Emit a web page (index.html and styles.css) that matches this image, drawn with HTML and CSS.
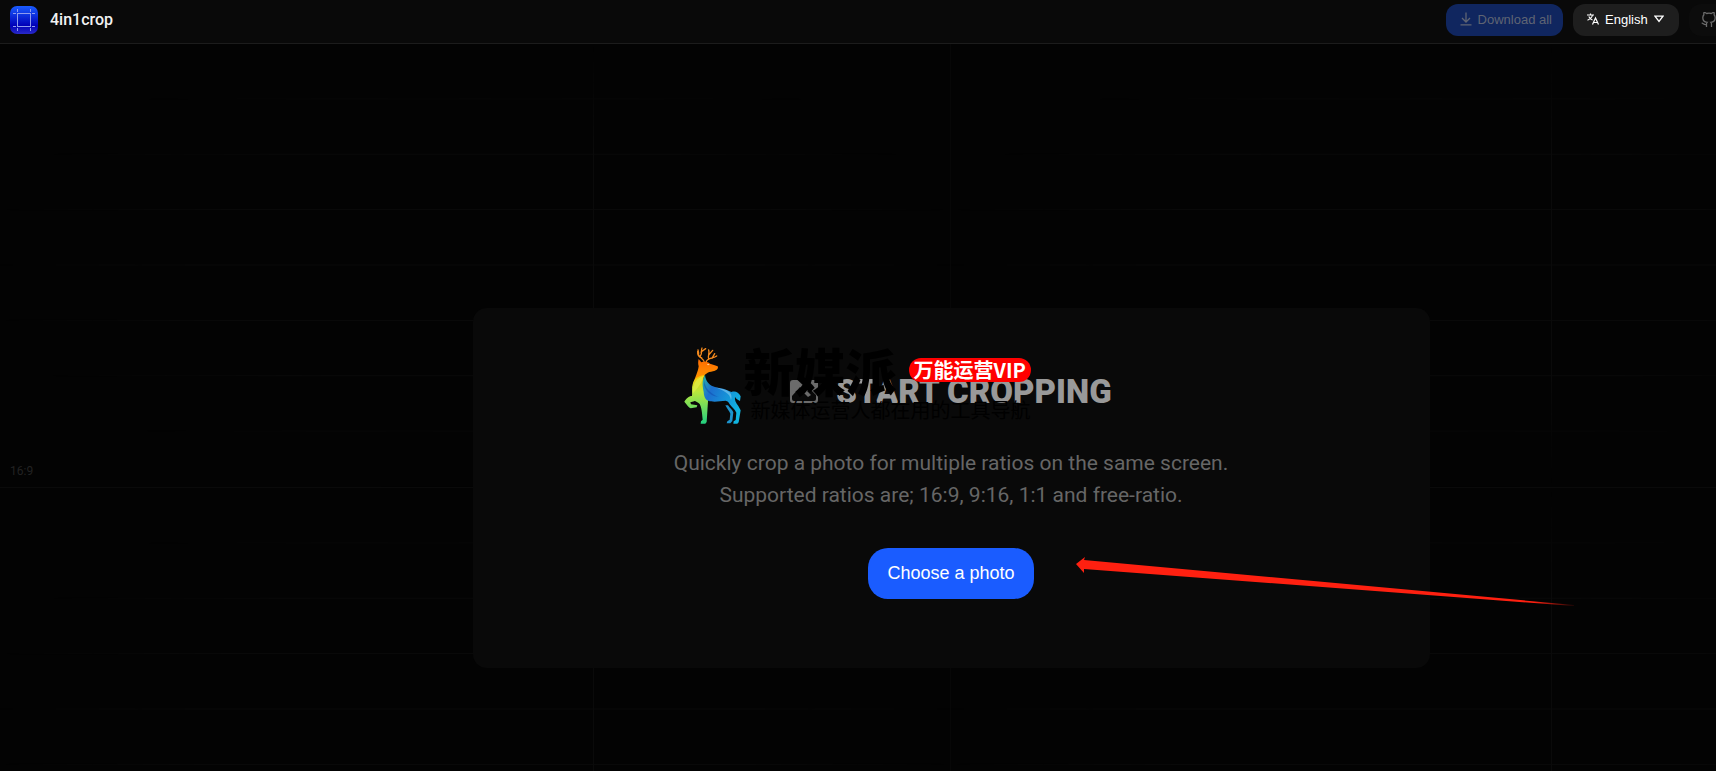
FILE: index.html
```html
<!DOCTYPE html>
<html lang="en">
<head>
    <meta charset="utf-8">
    <title>4in1crop</title>
    <link rel="stylesheet" href="styles.css">
</head>
<body>
    <div class="page">
        <header class="header">
            <a class="brand" href="#">
                <svg class="brand-logo" viewBox="0 0 28 28" aria-hidden="true">
                    <defs>
                        <linearGradient id="logoFill" x1="0" y1="0" x2="0" y2="1">
                            <stop offset="0" stop-color="#1a5cff"/>
                            <stop offset="0.7" stop-color="#0000b8"/>
                            <stop offset="1" stop-color="#2a2ac8"/>
                        </linearGradient>
                    </defs>
                    <rect width="28" height="28" rx="7" fill="url(#logoFill)"/>
                    <g stroke="#8f9bee" stroke-width="1" fill="none">
                        <path d="M7.500 3v3M7.500 7v14M7.500 22v3M20.500 3v3M20.500 7v14M20.500 22v3"/>
                        <path d="M3 7.500h3M7 7.500h14M22 7.500h3M3 20.500h3M7 20.500h14M22 20.500h3"/>
                    </g>
                </svg>
                <span class="brand-name">4in1crop</span>
            </a>
            <div class="actions">
                <button class="btn btn-download" type="button" disabled>
                    <svg width="12" height="14" viewBox="0 0 12 14" fill="none" stroke="currentColor" stroke-width="1.300" aria-hidden="true">
                        <path d="M6 0.500v9M2 6l4 4 4-4M0.500 12.800h11"/>
                    </svg>
                    Download all
                </button>
                <label class="btn btn-language">
                    <svg width="12" height="12" viewBox="0 0 12 12" fill="none" stroke="currentColor" stroke-width="1.200" aria-hidden="true">
                        <path d="M0 2h7M3.500 0.500V2M5.500 2C5 4.500 3 6.200 0.500 7.200M1.800 3.500C2.500 5 4 6.500 5.500 7"/>
                        <path d="M5.500 11.500L8.500 5l3 6.500M6.600 9.500h3.800"/>
                    </svg>
                    <select aria-label="Language">
                        <option>English</option>
                    </select>
                    <svg width="10" height="8" viewBox="0 0 10 8" fill="none" stroke="currentColor" stroke-width="1.300" aria-hidden="true">
                        <path d="M1 1.200h8L5 6.500z"/>
                    </svg>
                </label>
                <a class="btn btn-github" href="#" aria-label="GitHub">
                    <svg width="16" height="16" viewBox="0 0 16 16" fill="none" stroke="currentColor" stroke-width="1.300" aria-hidden="true">
                        <path d="M5.500 15v-2.500c-2.500.6-3-1-4.800-1.700M5.500 15v-2.800c0-.9.200-1.500.6-1.900-2.400-.3-4.300-1.300-4.300-4.600 0-1.200.4-2.200 1.100-3-.2-.8-.2-1.600.1-2.300 1 0 2 .6 2.700 1.100a9.500 9.500 0 0 1 4.600 0C11 1 12 .4 13 .4c.3.700.3 1.500.1 2.300.7.800 1.100 1.800 1.100 3 0 3.300-1.900 4.300-4.300 4.600.4.400.6 1 .6 1.900V15"/>
                    </svg>
                </a>
            </div>
        </header>

        <main class="stage">
            <div class="panels">
                <section class="panel"><span class="ratio">16:9</span></section>
                <section class="panel panel-right"></section>
                <section class="panel"></section>
                <section class="panel panel-right"></section>
            </div>

            <div class="card">
                <h1 class="card-title">
                    <svg width="28" height="24" viewBox="0 0 28 24" aria-hidden="true">
                        <path fill="#6b6b6b" fill-rule="evenodd" d="M3 0h22q3 0 3 3v17q0 3-3 3H3q-3 0-3-3V3q0-3 3-3zM2 16v3q0 2 2 2h20q2 0 2-2v-4l-6-6-5 3-5-5z"/>
                        <path fill="#6b6b6b" d="M12 11l3-2 6 6-3 2z"/>
                    </svg>
                    START CROPPING
                </h1>
                <p class="card-text">
                    Quickly crop a photo for multiple ratios on the same screen.<br>
                    Supported ratios are; 16:9, 9:16, 1:1 and free-ratio.
                </p>
                <button class="btn-choose" type="button">Choose a photo</button>

                <div class="stamp" lang="zh">
                    <svg class="deer" viewBox="0 0 192 258" aria-hidden="true">
                        <defs>
                            <linearGradient id="deerHead" x1="0" y1="0" x2="0" y2="1">
                                <stop offset="0" stop-color="#ff6a00"/>
                                <stop offset="1" stop-color="#ffb000"/>
                            </linearGradient>
                            <linearGradient id="deerNeck" x1="0" y1="0" x2="0" y2="1">
                                <stop offset="0" stop-color="#ffc400"/>
                                <stop offset="0.350" stop-color="#b8e83c"/>
                                <stop offset="1" stop-color="#22cf80"/>
                            </linearGradient>
                            <linearGradient id="deerBody" x1="0" y1="0" x2="1" y2="0.600">
                                <stop offset="0" stop-color="#27b8a0"/>
                                <stop offset="0.300" stop-color="#1c6fcf"/>
                                <stop offset="1" stop-color="#10b4e0"/>
                            </linearGradient>
                        </defs>
                        <g fill="none" stroke="#f58a1e" stroke-width="4" stroke-linecap="round">
                            <path d="M73 62C72 48 54 48 54 32M65 48C54 44 52 38 53 28M61 42C68 34 62 24 66 18M63 30l14-10M78 62C80 46 96 52 110 42M86 52C82 42 90 36 86 24M87 38l11-13M96 49l8-14M56 34l-2-10"/>
                        </g>
                        <path fill="url(#deerHead)" d="M56 51l8 10c10-3 20-1 26 4 8 3 16 5 23 8 3 6-2 11-8 13-8 3-16 2-22 6-12 7-20 17-26 27-8 9-14 16-18 27-2-18 4-34 10-48 4-10 6-17 7-25-2-7-2-15 0-22z"/>
                        <path fill="url(#deerNeck)" d="M74 98c-8 20-4 32 3 46 5 12 9 20 7 34l-4 62-4 5H62l1-7 5-5c-2-22-3-36-9-47-6-5-12-8-15-9-6 2-9 2-13 4l2 6 19 3-2 6-18 3c-6-3-11-10-19-20 6-9 13-17 23-17 2-12-2-25 2-35 3-15 12-24 36-29z"/>
                        <path fill="#e0ef48" opacity="0.700" d="M70 102c-20 6-32 22-33 54 14-16 29-31 33-54z"/>
                        <path fill="url(#deerBody)" d="M75 98c2 20 13 32 30 37 15 4 34 6 49 15 11-4 22 0 28 13l-2 14c-8-5-13-8-15-13-2 10 3 19 10 28l7 13-6 36-4 4h-12l1-7 6-4 2-22c-4-10-14-16-20-25-3-7-6-10-12-11-15 0-29 5-43 2-13 0-22-8-23-28-3-18-7-32 4-52z"/>
                        <path fill="#104fb0" opacity="0.550" d="M73 114c2 27 16 38 42 51-17-2-37-13-43-36z"/>
                        <path fill="#9bd8f6" opacity="0.500" d="M105 136c16 4 32 5 43 14 7 6 8 16 5 25-2-22-25-30-48-39z"/>
                        <path fill="#1d93cc" d="M144 190c6 10 12 12 16 21l-3 26-6 7h-11l2-6 7-5 2-18c-3-8-9-13-15-25z"/>
                        <path fill="#ffe9c8" d="M81 66l8 1-5 3z"/>
                    </svg>
                    <div class="stamp-body">
                        <div class="stamp-row">
                            <strong class="stamp-name">新媒派</strong>
                            <span class="stamp-pill">万能运营VIP</span>
                        </div>
                        <span class="stamp-tagline">新媒体运营人都在用的工具导航</span>
                    </div>
                </div>

                <svg class="pointer" viewBox="0 0 504 52" aria-hidden="true">
                    <defs>
                        <linearGradient id="pointerFill">
                            <stop offset="0.920" stop-color="#ff2010"/>
                            <stop offset="1" stop-color="#ff2010" stop-opacity="0.100"/>
                        </linearGradient>
                    </defs>
                    <path fill="url(#pointerFill)" d="M0 8l9-7-1 3 490 45v1L8 13v4z"/>
                </svg>
            </div>
        </main>
    </div>
</body>
</html>
```
FILE: styles.css
```css
* {
    box-sizing: border-box;
}
body {
    margin: 0;
    height: 100vh;
    overflow: hidden;
    background-color: #030303;
    color: #fff;
    font-family: Roboto, sans-serif;
}
.page {
    min-width: 1902px;
}

/* header */
.header {
    display: flex;
    justify-content: space-between;
    align-items: flex-start;
    height: 44px;
    padding: 4px 10px;
    background-color: #090909;
    border-bottom: 1px solid #1c1c1c;
}
.brand {
    display: flex;
    align-items: center;
    gap: 12px;
    height: 32px;
    color: #f2f2f2;
    text-decoration: none;
}
.brand-logo {
    width: 28px;
    height: 28px;
}
.brand-name {
    padding-bottom: 2px;
    font-size: 16px;
    font-weight: 500;
}
.actions {
    display: flex;
    gap: 10px;
}
.btn {
    display: flex;
    align-items: center;
    height: 32px;
    border: none;
    border-radius: 12px;
    font-family: "Liberation Sans", sans-serif;
    font-size: 13px;
}
.btn-download {
    gap: 6px;
    padding: 0 11px 2px 14px;
    background-color: #10265f;
    color: #5f6473;
}
.btn-language {
    gap: 6px;
    padding: 0 15px 2px 14px;
    background-color: #1e1e1e;
    color: #fff;
}
.btn-language select {
    appearance: none;
    border: none;
    padding: 0;
    background: none;
    color: inherit;
    font: inherit;
}
.btn-github {
    width: 203px;
    padding: 0 12px;
    background-color: #0c0c0c;
    color: #6b6b6b;
}

/* crop panels */
.stage {
    display: grid;
}
.panels {
    grid-area: 1 / 1;
    display: grid;
    grid-template-columns: 1fr 1fr;
    grid-auto-rows: 444px;
}
.panel {
    display: flex;
    align-items: flex-end;
    position: relative;
    border-right: 1px solid #070707;
    border-bottom: 1px solid #0a0a0a;
}
.panel::before {
    content: "";
    position: absolute;
    inset: 0;
    background-image:
        linear-gradient(to right, #0a0a0a 1px, transparent 1px),
        linear-gradient(to bottom, #0a0a0a 1px, transparent 1px);
    background-size: 121px 12.5%;
    background-position: 109px -1px;
    mask-image: radial-gradient(ellipse at center, #000 40%, transparent 72%);
}
.panel-right::before {
    background-position: 116px -1px;
}
.ratio {
    padding: 9px 10px;
    color: #222;
    font-size: 12px;
    line-height: 14px;
}

/* start card */
.card {
    grid-area: 1 / 1;
    place-self: center;
    position: relative;
    display: flex;
    flex-direction: column;
    align-items: center;
    justify-content: center;
    width: 957px;
    min-height: 360px;
    padding-bottom: 2px;
    border-radius: 14px;
    background-color: #090909;
}
.card-title {
    display: flex;
    align-items: center;
    gap: 18px;
    margin: 0 0 39px;
    color: #999;
    font-size: 33px;
    font-weight: 900;
    line-height: 32px;
}
.card-text {
    margin: 0 0 37px;
    color: #666;
    font-size: 21px;
    line-height: 32px;
    text-align: center;
}
.btn-choose {
    height: 51px;
    padding: 0 19px;
    border: none;
    border-radius: 20px;
    background-color: #1a5cff;
    color: #fff;
    font-family: "Liberation Sans", sans-serif;
    font-size: 18px;
}

/* stamp over the card title */
.stamp {
    position: absolute;
    left: 207px;
    top: 34px;
    display: flex;
    color: #000;
    font-family: "Noto Sans CJK SC", sans-serif;
}
.deer {
    width: 64px;
    height: 86px;
}
.stamp-body {
    padding-top: 2px;
}
.stamp-row {
    display: flex;
    align-items: center;
    gap: 12px;
    height: 52px;
}
.stamp-name {
    font-size: 51px;
    font-weight: 900;
    line-height: 52px;
}
.stamp-pill {
    padding: 0 5px;
    border-radius: 12px;
    background-color: #f00;
    color: #fff;
    font-size: 20px;
    font-weight: 700;
    line-height: 24px;
}
.stamp-tagline {
    display: block;
    padding-left: 7px;
    font-size: 20px;
    line-height: 28px;
}
.pointer {
    position: absolute;
    left: 603px;
    top: 248px;
    width: 504px;
    height: 52px;
}

.btn-choose,
.btn-language {
    cursor: pointer;
}
.btn-choose:hover {
    background-color: #3370ff;
}
```
